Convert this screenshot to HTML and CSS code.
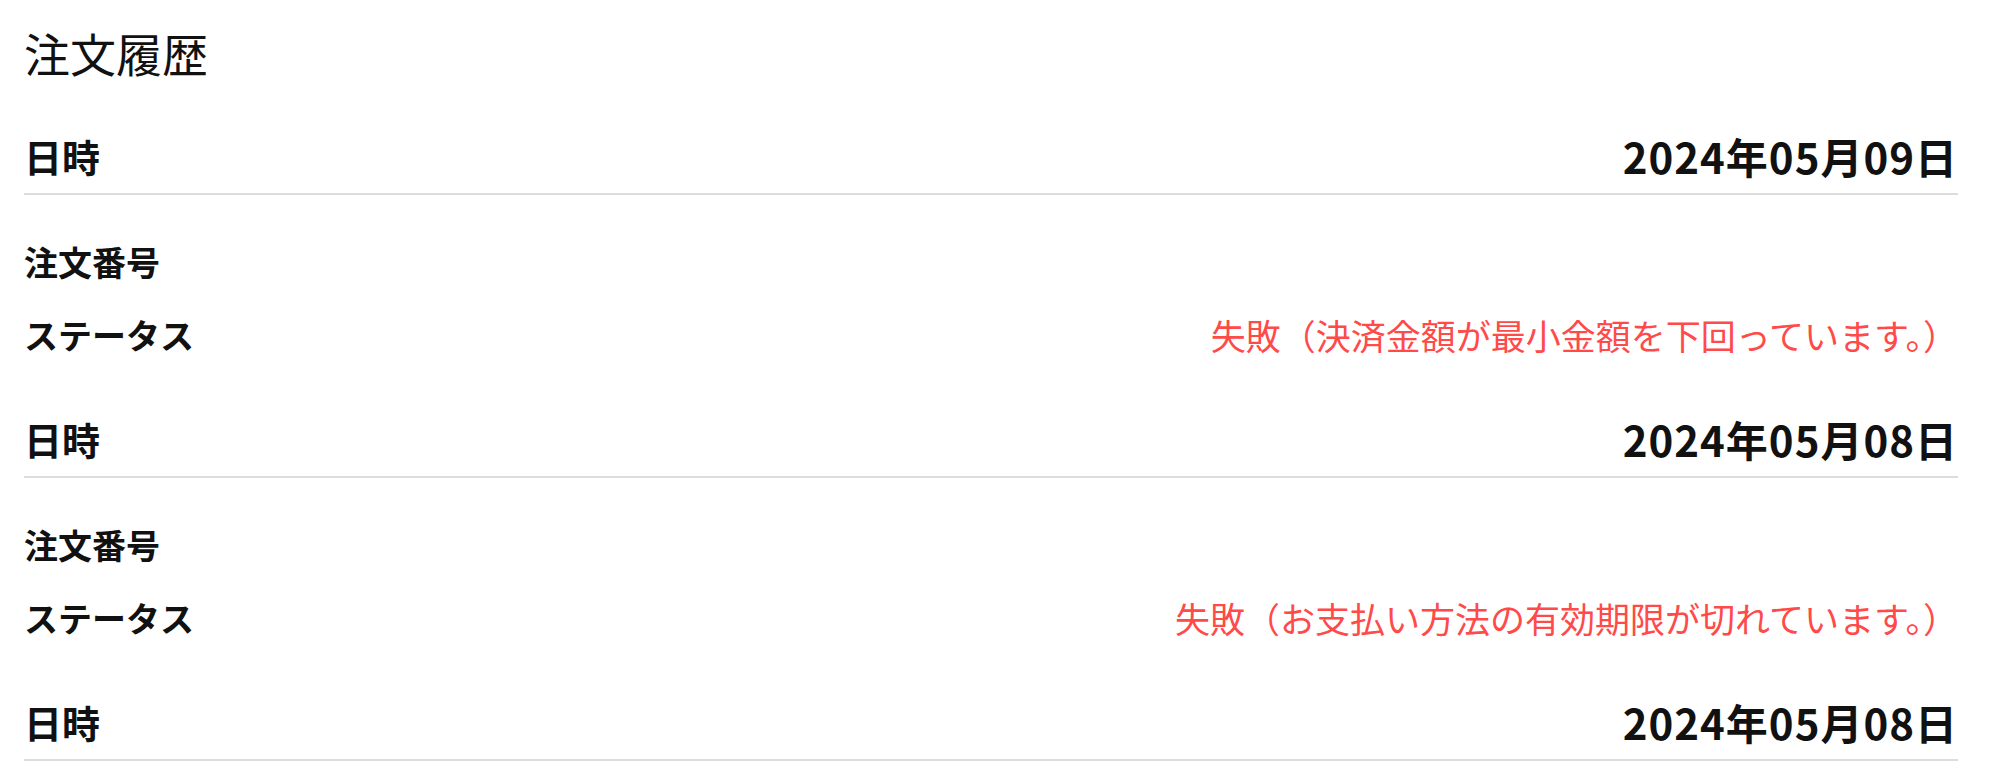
FILE: index.html
```html
<!DOCTYPE html>
<html lang="ja">
<head>
  <meta charset="UTF-8">
  <meta name="viewport" content="width=device-width, initial-scale=1.0">
  <title>注文履歴</title>
  <link rel="stylesheet" href="styles.css">
</head>
<body>

  <h1 class="page-title">注文履歴</h1>

  <div class="order">
    <div class="row row-date">
      <span class="label-date">日時</span>
      <span class="value-date">2024年05月09日</span>
    </div>
    <div class="row row-number">
      <span class="label">注文番号</span>
      <span class="value"></span>
    </div>
    <div class="row row-status">
      <span class="label">ステータス</span>
      <span class="status-error">失敗（決済金額が最小金額を下回っています。）</span>
    </div>
  </div>

  <div class="order">
    <div class="row row-date">
      <span class="label-date">日時</span>
      <span class="value-date">2024年05月08日</span>
    </div>
    <div class="row row-number">
      <span class="label">注文番号</span>
      <span class="value"></span>
    </div>
    <div class="row row-status">
      <span class="label">ステータス</span>
      <span class="status-error">失敗（お支払い方法の有効期限が切れています。）</span>
    </div>
  </div>

  <div class="order">
    <div class="row row-date">
      <span class="label-date">日時</span>
      <span class="value-date">2024年05月08日</span>
    </div>
  </div>

</body>
</html>
```

FILE: styles.css
```css
body {
  font-family: "Noto Sans CJK JP", "Noto Sans", sans-serif;
  background-color: #fff;
  color: #111;
  margin: 0;
  padding: 0 42px 0 24px;
}
.page-title {
  font-size: 46px;
  font-weight: normal;
  line-height: 104px;
  height: 104px;
  margin: 0;
}
.order {
  margin-bottom: 28px;
}
.row {
  display: flex;
  justify-content: space-between;
  align-items: center;
  height: 50px;
}
.row-date {
  padding: 26px 0 13px;
  border-bottom: 2px solid #dcdcdc;
}
.row-number {
  margin-top: 41px;
}
.row-status {
  margin-top: 23px;
}
.label-date {
  font-size: 38px;
  font-weight: bold;
}
.value-date {
  font-size: 42px;
  font-weight: bold;
  letter-spacing: 1px;
}
.label {
  font-size: 34px;
  font-weight: bold;
}
.status-error {
  font-size: 35px;
  color: #ff4a4a;
}
```
